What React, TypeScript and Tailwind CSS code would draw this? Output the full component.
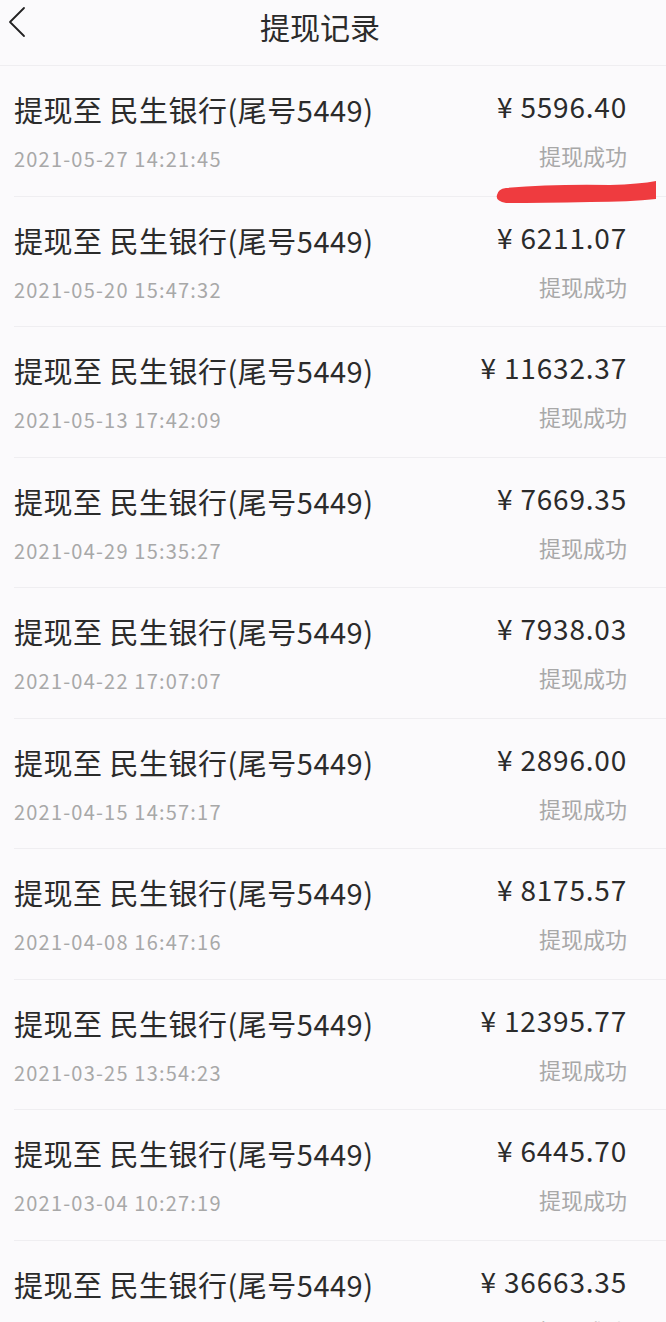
const records = [
  { amount: "5596.40", time: "2021-05-27 14:21:45" },
  { amount: "6211.07", time: "2021-05-20 15:47:32" },
  { amount: "11632.37", time: "2021-05-13 17:42:09" },
  { amount: "7669.35", time: "2021-04-29 15:35:27" },
  { amount: "7938.03", time: "2021-04-22 17:07:07" },
  { amount: "2896.00", time: "2021-04-15 14:57:17" },
  { amount: "8175.57", time: "2021-04-08 16:47:16" },
  { amount: "12395.77", time: "2021-03-25 13:54:23" },
  { amount: "6445.70", time: "2021-03-04 10:27:19" },
  { amount: "36663.35", time: "" },
];

const App = () => {
  return (
    <div
      className="w-[666px] h-[1322px] overflow-hidden bg-[#fbfafc] text-[#2b2b2b] relative"
      style={{ fontFamily: '"Noto Sans CJK SC", "Noto Sans", sans-serif' }}
    >
      <header className="h-[66px] relative flex items-center justify-center border-b border-[#efeef1]">
        <svg
          className="absolute left-0 top-0"
          width="40"
          height="44"
          viewBox="0 0 40 44"
          fill="none"
        >
          <path
            d="M24 8 L10 22 L24 36"
            stroke="#222"
            strokeWidth="1.8"
            strokeLinecap="round"
            strokeLinejoin="round"
          />
        </svg>
        <h1 className="text-[30px] font-normal mt-[-12px] ml-[-26px]">提现记录</h1>
      </header>

      <ul>
        {records.map((r, i) => (
          <li key={i} className="h-[130.5px] pl-[14px] relative">
            <div className="h-full flex justify-between pr-[39px] border-b border-[#efeef1]">
              <div className="flex flex-col">
                <p className="text-[29px] leading-none mt-[29px] tracking-[0.5px]">
                  提现至 民生银行(尾号5449)
                </p>
                <p className="text-[20px] leading-none mt-[25px] text-[#a8a8a8] tracking-[1.2px]">
                  {r.time}
                </p>
              </div>
              <div className="flex flex-col items-end">
                <p className="text-[28px] leading-none mt-[26px] tracking-[0.8px]">
                  ¥ {r.amount}
                </p>
                <p className="text-[22px] leading-none mt-[24px] text-[#a8a8a8]">
                  提现成功
                </p>
              </div>
            </div>
          </li>
        ))}
      </ul>

      <svg
        className="absolute left-[490px] top-[178px]"
        width="176"
        height="32"
        viewBox="0 0 176 32"
      >
        <path
          d="M16 10 Q60 6 120 7 Q150 6 166 3 L166 21 Q140 24 100 24 Q50 25 16 25 Q5 23 7 17 Q8 11 16 10 Z"
          fill="#ef3b3f"
        />
      </svg>
    </div>
  );
};

export default App;
